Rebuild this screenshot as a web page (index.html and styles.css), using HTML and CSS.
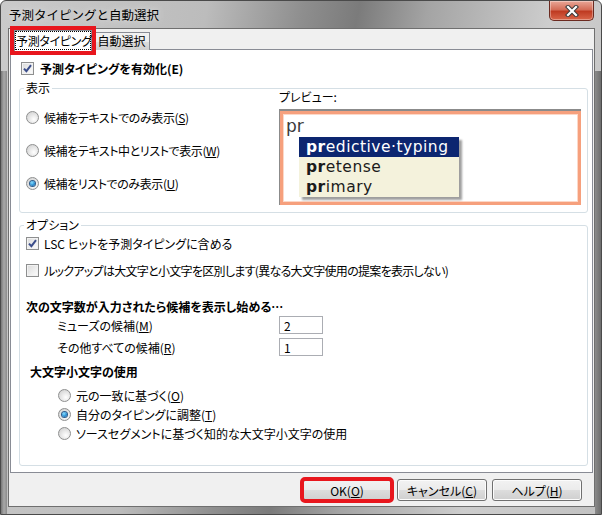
FILE: index.html
```html
<!DOCTYPE html>
<html lang="ja">
<head>
  <meta charset="UTF-8">
  <title>予測タイピングと自動選択</title>
  <link rel="stylesheet" href="styles.css">
</head>
<body>

  <div class="window">
    <div class="titlebar">
      <span class="title">予測タイピングと自動選択</span>
      <div class="close">
        <svg width="14" height="12" viewBox="0 0 14 12">
          <path d="M3 2 L11 10 M11 2 L3 10" stroke="#3b3b3b" stroke-width="4.2" stroke-linecap="square"/>
          <path d="M3 2 L11 10 M11 2 L3 10" stroke="#fff" stroke-width="2.2" stroke-linecap="square"/>
        </svg>
      </div>
    </div>

    <div class="client">
      <div class="tabs">
        <div class="tab active"><span class="focus">予測タイピング</span></div>
        <div class="tab">自動選択</div>
      </div>

      <div class="panel">
        <div class="row main-check">
          <span class="box"><svg width="9" height="9" viewBox="0 0 9 9"><path d="M1 4.6 L3.4 7.2 L8 1.2" fill="none" stroke="#3b4d8a" stroke-width="2"/></svg></span>
          <b>予測タイピングを有効化(E)</b>
        </div>

        <div class="group display">
          <span class="legend">表示</span>
          <div class="radios">
            <div class="row"><span class="radio"></span><span class="tight">候補をテキストでのみ表示(<u>S</u>)</span></div>
            <div class="row"><span class="radio"></span><span class="tight">候補をテキスト中とリストで表示(<u>W</u>)</span></div>
            <div class="row"><span class="radio on"></span><span class="tight">候補をリストでのみ表示(<u>U</u>)</span></div>
          </div>
          <div class="preview">
            <div class="preview-label">プレビュー:</div>
            <div class="preview-box">
              <div class="preview-field">
                <div class="typed">pr</div>
                <ul class="suggest">
                  <li class="sel"><b>pr</b>edictive·typing</li>
                  <li><b>pr</b>etense</li>
                  <li><b>pr</b>imary</li>
                </ul>
              </div>
            </div>
          </div>
        </div>

        <div class="group options">
          <span class="legend">オプション</span>
          <div class="row lsc">
            <span class="box"><svg width="9" height="9" viewBox="0 0 9 9"><path d="M1 4.6 L3.4 7.2 L8 1.2" fill="none" stroke="#3b4d8a" stroke-width="2"/></svg></span>
            <span>LSC ヒットを予測タイピングに含める</span>
          </div>
          <div class="row case">
            <span class="box"></span>
            <span class="tighter">ルックアップは大文字と小文字を区別します(異なる大文字使用の提案を表示しない)</span>
          </div>

          <div class="heading">次の文字数が入力されたら候補を表示し始める…</div>
          <div class="field first">
            <span class="field-label">ミューズの候補(<u>M</u>)</span>
            <input class="num" type="text" value="2">
          </div>
          <div class="field">
            <span class="field-label">その他すべての候補(<u>R</u>)</span>
            <input class="num" type="text" value="1">
          </div>

          <div class="heading caps">大文字小文字の使用</div>
          <div class="case-radios">
            <div class="row"><span class="radio"></span><span>元の一致に基づく(<u>O</u>)</span></div>
            <div class="row"><span class="radio on"></span><span>自分のタイピングに調整(<u>T</u>)</span></div>
            <div class="row"><span class="radio"></span><span>ソースセグメントに基づく知的な大文字小文字の使用</span></div>
          </div>
        </div>
      </div>

      <div class="buttons">
        <button class="btn default">OK(<u>O</u>)</button>
        <button class="btn">キャンセル(<u>C</u>)</button>
        <button class="btn">ヘルプ(<u>H</u>)</button>
      </div>
    </div>
  </div>

</body>
</html>
```

FILE: styles.css
```css
body {
  margin: 0;
  font-family: "Noto Sans CJK JP", sans-serif;
  font-size: 12px;
  font-feature-settings: "palt";
  color: #000;
}
.window {
  width: 602px;
  height: 515px;
  box-sizing: border-box;
  border: 1px solid #4a4a4a;
  border-radius: 6px 6px 0 0;
  padding: 0 6px 7px 7px;
  display: flex;
  flex-direction: column;
  background:
    linear-gradient(to right, #777, #a8a8a8 3px, #8c8c8c 6px, transparent 6px, transparent calc(100% - 6px), #8a8a8a calc(100% - 6px), #6e6e6e) 0 70px / 100% 100% no-repeat,
    linear-gradient(100deg, #cacaca 0%, #bcbcbc 30%, #8e8e8e 44%, #7b7b7b 52%, #a4a4a4 62%, #cdcdcd 80%, #c2c2c2 100%);
}
.titlebar {
  display: flex;
  align-items: flex-start;
  height: 27px;
  flex: none;
}
.title {
  font-size: 12.5px;
  font-feature-settings: normal;
  line-height: 16px;
  margin: 6px 0 0 1px;
  text-shadow: 0 0 6px #e8e8e8;
}
.close {
  margin-left: auto;
  margin-right: 1px;
  width: 45px;
  height: 20px;
  box-sizing: border-box;
  border: 1px solid #6b2a20;
  border-top: none;
  border-radius: 0 0 5px 5px;
  background: linear-gradient(#e9a797, #d46d58 45%, #bf3b22 55%, #d9664a);
  box-shadow: inset 0 0 0 1px rgba(255, 255, 255, 0.35);
  display: flex;
  align-items: center;
  justify-content: center;
}
.client {
  flex: 1;
  display: flex;
  flex-direction: column;
  background: #f0f0f0;
  border: 1px solid #6f6f6f;
}
/* Tabs */
.tabs {
  display: flex;
  align-items: flex-end;
  height: 21px;
  flex: none;
  padding-left: 5px;
}
.tab {
  position: relative;
  box-sizing: border-box;
  height: 18px;
  width: 57px;
  margin-left: 1px;
  border: 1px solid #898c95;
  border-bottom: none;
  background: linear-gradient(#f2f2f2, #ebebeb 50%, #dddddd 51%, #cfcfcf);
  line-height: 16px;
  text-align: center;
  white-space: nowrap;
  font-feature-settings: normal;
}
.tab.active {
  height: 21px;
  width: 78px;
  margin-left: 0;
  margin-bottom: -1px;
  background: #fff;
  z-index: 1;
  outline: 4px solid #e8161d;
  font-feature-settings: "palt";
}
.focus {
  display: block;
  margin: 1px 1px 0;
  height: 17px;
  outline: 1px dotted #000;
  line-height: 18px;
  letter-spacing: -0.3px;
}
.panel {
  height: 424px;
  flex: none;
  box-sizing: border-box;
  margin: -1px 1px 0;
  border: 1px solid #898c95;
  background: #fff;
  padding-top: 10px;
}
.row {
  display: flex;
  align-items: center;
  height: 16px;
  gap: 5px;
  white-space: nowrap;
}
.main-check {
  padding-left: 10px;
  gap: 6px;
}
/* Check and radio */
.box {
  flex: none;
  width: 13px;
  height: 13px;
  box-sizing: border-box;
  border: 1px solid #8e8f8f;
  background: linear-gradient(135deg, #dadada, #f3f3f3 70%, #fdfdfd);
  box-shadow: inset 0 0 0 1px #f2f2f2;
  display: flex;
  align-items: center;
  justify-content: center;
}
.radio {
  flex: none;
  width: 13px;
  height: 13px;
  box-sizing: border-box;
  border: 1px solid #8e8f8f;
  border-radius: 50%;
  background: radial-gradient(circle at 62% 66%, #ffffff, #e2e2e2 55%, #c9c9c9);
  display: flex;
  align-items: center;
  justify-content: center;
}
.radio.on::after {
  content: "";
  width: 5px;
  height: 5px;
  border-radius: 50%;
  background: radial-gradient(circle at 40% 35%, #8be0ff, #2a8fd4 55%, #0d4b84);
  box-shadow: 0 0 0 1px #2f5d8c;
}
/* Group boxes */
.group {
  position: relative;
  box-sizing: border-box;
  margin: 12px 4px 0 8px;
  border: 1px solid #d5dfe5;
  border-radius: 3px;
}
.legend {
  position: absolute;
  top: -9px;
  left: 4px;
  padding: 0 2px;
  background: #fff;
  line-height: 16px;
}
.display {
  height: 125px;
  display: grid;
  grid-template-columns: 259px 302px;
}
.radios {
  padding: 20px 0 0 6px;
  display: flex;
  flex-direction: column;
  gap: 17px;
}
.preview-label {
  line-height: 16px;
}
.preview-box {
  margin-top: 4px;
  height: 96px;
  box-sizing: border-box;
  border-top: 2px solid #8b8b8b;
  border-left: 1px solid #8b8b8b;
}
.preview-field {
  height: 100%;
  box-sizing: border-box;
  border: 3px solid #f6a07d;
  box-shadow: inset 0 0 0 1px #fcd8c8;
  padding: 2px 0 0 3px;
  font-family: "DejaVu Sans", sans-serif;
}
.typed {
  font-size: 17px;
  line-height: 21px;
  color: #3a3a3a;
}
.suggest {
  list-style: none;
  margin: 0 0 0 13px;
  padding: 0;
  width: 160px;
  background: #f4f2dc;
  box-shadow: 3px 3px 2px rgba(0, 0, 0, 0.38);
}
.suggest li {
  height: 20px;
  line-height: 20px;
  padding-left: 7px;
  font-size: 15.5px;
  letter-spacing: 0.5px;
  color: #1b1b1b;
  white-space: nowrap;
}
.suggest li.sel {
  background: #0c2670;
  color: #fff;
}
.options {
  height: 241px;
  padding: 9px 0 0 6px;
}
.case {
  margin-top: 11px;
}
.tight {
  letter-spacing: -0.4px;
}
.tighter {
  letter-spacing: -0.7px;
}
.heading {
  margin-top: 21px;
  font-weight: bold;
  line-height: 16px;
}
.field {
  display: flex;
  align-items: center;
  height: 18px;
  margin-top: 4px;
  padding-left: 31px;
}
.field.first {
  margin-top: 1px;
}
.field-label {
  width: 222px;
}
.num {
  width: 44px;
  height: 18px;
  box-sizing: border-box;
  margin: 0;
  border: 1px solid #abadb3;
  padding: 0 0 0 4px;
  font: 12px "Noto Sans CJK JP", sans-serif;
  color: #000;
}
.heading.caps {
  margin: 8px 0 0 4px;
}
.case-radios {
  margin: 6px 0 0 32px;
}
.case-radios .row {
  height: 19px;
}
/* Buttons */
.buttons {
  flex: 1;
  display: flex;
  justify-content: flex-end;
  align-items: flex-start;
  gap: 5px;
  padding: 6px 12px 0 0;
}
.btn {
  width: 90px;
  height: 22px;
  margin: 0;
  padding: 0;
  border: 1px solid #707070;
  border-radius: 3px;
  background: linear-gradient(#f2f2f2, #ebebeb 50%, #dddddd 51%, #cfcfcf);
  box-shadow: inset 0 0 0 1px #fcfcfc;
  font: 12px "Noto Sans CJK JP", sans-serif;
  font-feature-settings: "palt";
  color: #000;
}
.btn.default {
  border-color: #3c7fb1;
  box-shadow: inset 0 0 0 1px #48d7f6;
  outline: 4px solid #e8161d;
  outline-offset: -2px;
}
```
